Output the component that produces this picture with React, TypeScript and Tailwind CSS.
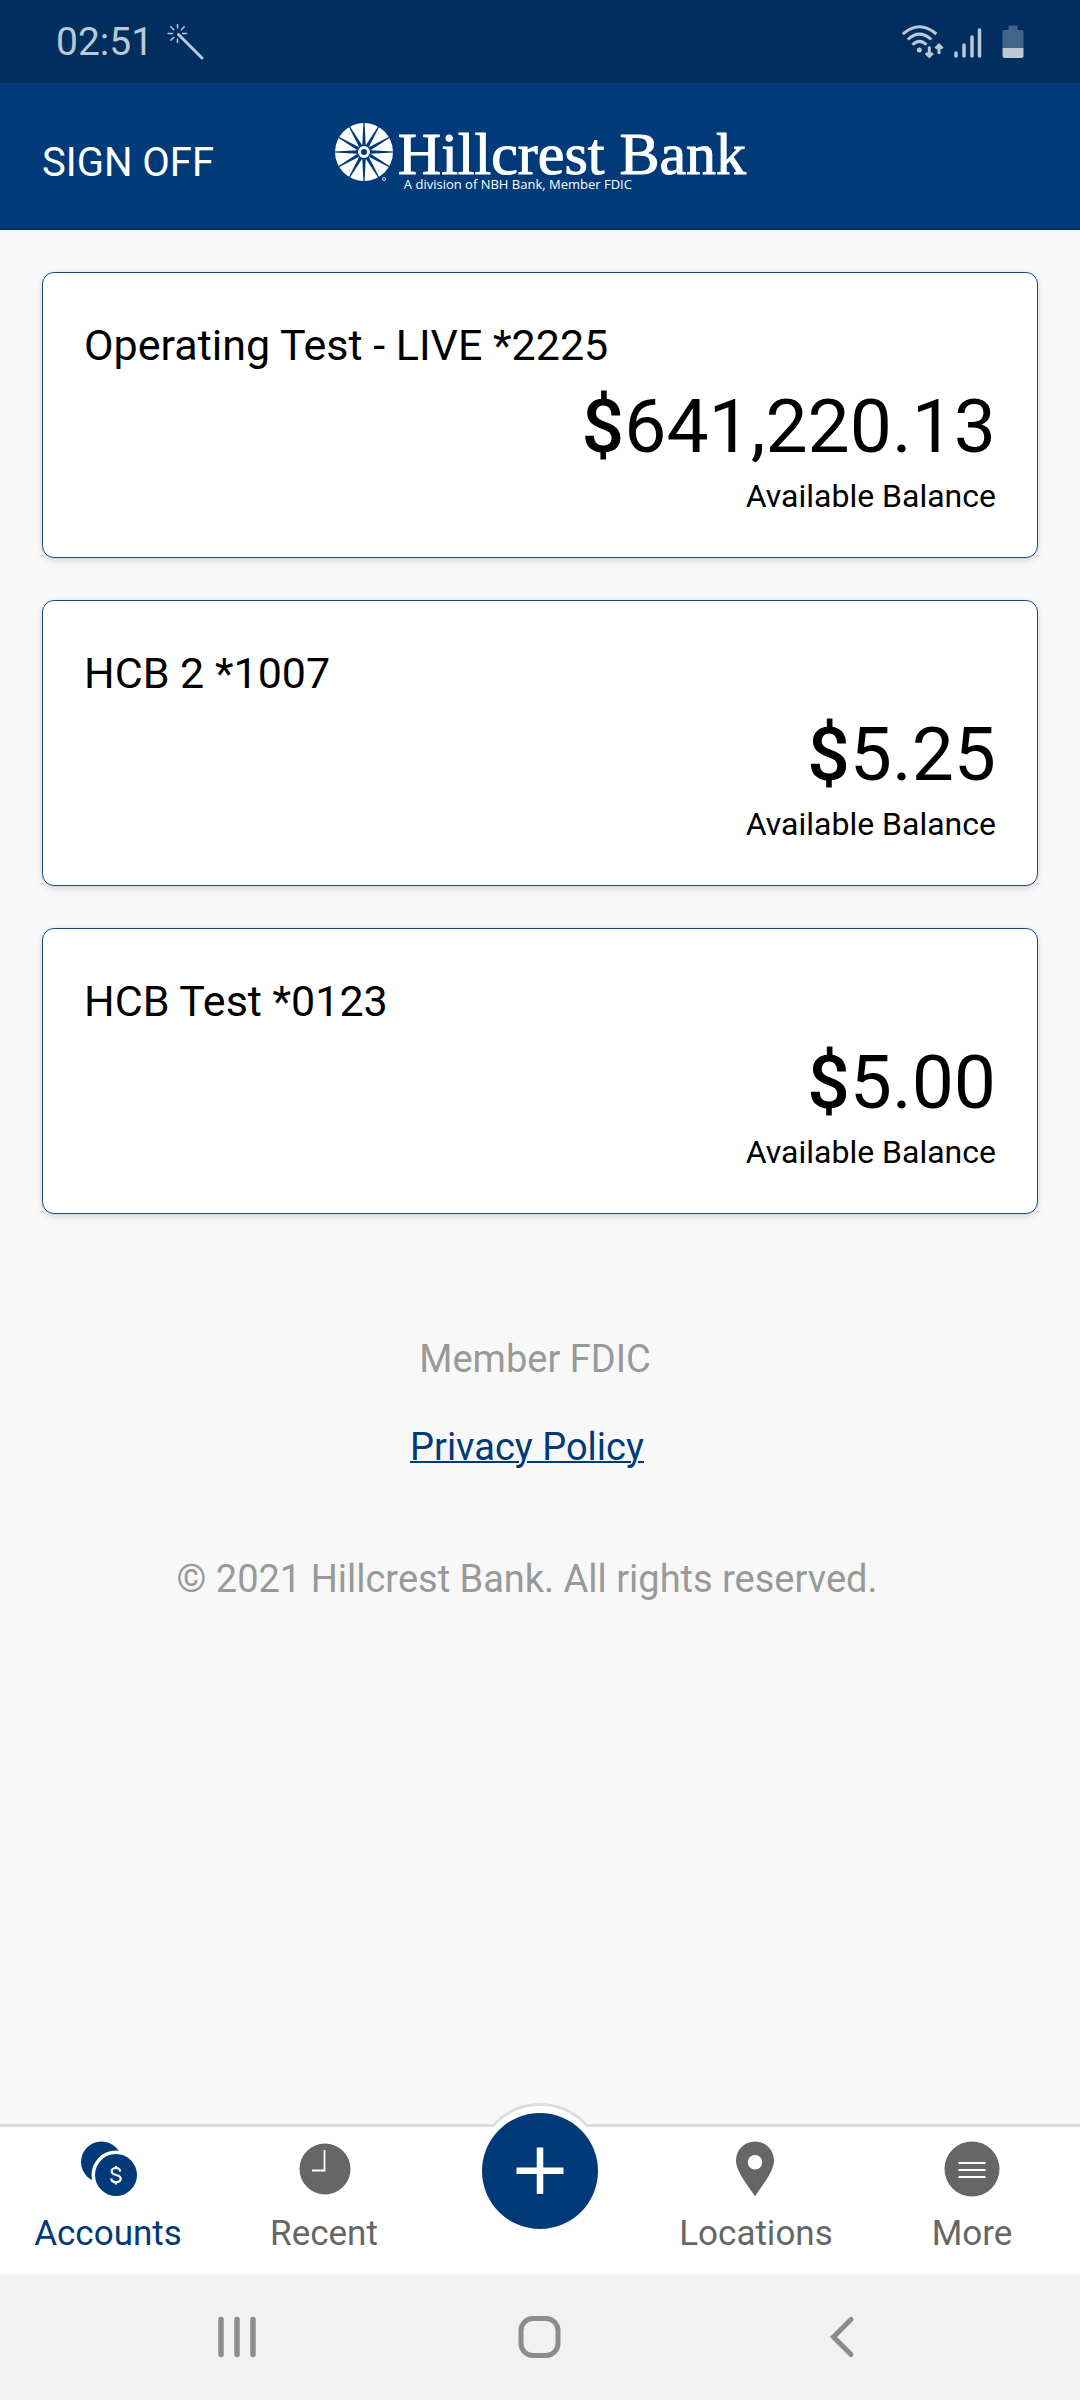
import React from 'react';

interface Account {
  name: string;
  balance: string;
}

const accounts: Account[] = [
  { name: 'Operating Test - LIVE *2225', balance: '641,220.13' },
  { name: 'HCB 2 *1007', balance: '5.25' },
  { name: 'HCB Test *0123', balance: '5.00' },
];

const spokes = [0, 30, 60, 90, 120, 150, 180, 210, 240, 270, 300, 330];

const WandIcon = () => (
  <svg width="38" height="38" viewBox="0 0 38 38" fill="none" stroke="currentColor" strokeLinecap="round">
    <path d="M11.5 11.5 35 35" strokeWidth="3" />
    <path d="M10.5 1.500v3.500M10.500 16v3.500M1 10.500h4.500M15.500 10.500h4M3.800 3.800l3 3M17.300 3.800l-3 3M3.800 17.200l3-3" strokeWidth="1.500" />
  </svg>
);

const WifiIcon = () => (
  <svg width="42" height="34" viewBox="0 0 42 34" fill="none" stroke="currentColor" strokeWidth="3">
    <path d="M.8 9Q17.500-5.500 34.300 9M5.800 14.500Q17.500 3.800 29.300 14.500M10.500 19.800Q17.500 12.800 24.500 19.800" />
    <circle cx="17.300" cy="25" r="2.500" fill="currentColor" stroke="none" />
    <path d="M27.300 21.500v9M23.800 28l3.500 3.500 3.500-3.500M37 29v-8M33.500 23.500 37 20l3.500 3.500" />
  </svg>
);

const SignalIcon = () => (
  <svg width="28" height="34" viewBox="0 0 28 34" stroke="currentColor" strokeWidth="3.500" strokeLinecap="round">
    <path d="M2 28v3M10 20v11M18 12v19M25.500 5v26" />
  </svg>
);

const BatteryIcon = () => (
  <svg width="22" height="34" viewBox="0 0 22 34" fill="currentColor">
    <path d="M6.500 1.500a1 1 0 0 1 1-1h7a1 1 0 0 1 1 1V5H20a1.500 1.500 0 0 1 1.500 1.500V23H.5V6.500A1.500 1.500 0 0 1 2 5h4.500z" opacity="0.350" />
    <path d="M.5 23h21v8a2 2 0 0 1-2 2h-17a2 2 0 0 1-2-2z" />
  </svg>
);

const WheelLogo = () => (
  <svg width="60" height="60" viewBox="-30 -30 60 60">
    <circle r="29" fill="white" />
    {spokes.map((angle) => (
      <path key={angle} d="M-1.700-7 1.700-7 .6-29.500-.6-29.500z" fill="#003a78" transform={`rotate(${angle})`} />
    ))}
    <circle r="7.500" fill="#003a78" />
    <circle r="4.500" fill="none" stroke="white" strokeWidth="3" />
    <circle cx="20" cy="27" r="1.500" fill="none" stroke="white" strokeWidth="0.800" />
  </svg>
);

const CoinsIcon = () => (
  <svg width="58" height="56" viewBox="0 0 58 56">
    <circle cx="22.500" cy="21" r="20.500" fill="#003a78" />
    <circle cx="37" cy="34" r="24.500" fill="white" />
    <circle cx="37" cy="34" r="21" fill="#003a78" />
    <path d="M41.300 30.500c-.4-2.300-2-3.500-4.300-3.500-2.500 0-4.300 1.200-4.300 3.400 0 4.900 9 2.200 9 7.200 0 2.300-2 3.600-4.700 3.600s-4.500-1.200-4.800-3.700M37 25v3M37 40.500v3" fill="none" stroke="white" strokeWidth="2.200" />
  </svg>
);

const ClockIcon = () => (
  <svg width="56" height="56" viewBox="0 0 56 56">
    <circle cx="29" cy="28" r="25.500" fill="#666" />
    <path d="M28.500 9v20.500H16" fill="none" stroke="white" strokeWidth="1.800" />
  </svg>
);

const PinIcon = () => (
  <svg width="56" height="56" viewBox="0 0 56 56">
    <path fillRule="evenodd" fill="#666" d="M27 .5C16.500.5 8 9 8 19.500 8 31 21 45.500 27 55.500 33 45.500 46 31 46 19.500 46 9 37.500.5 27 .5zM27 14a7 7 0 1 1 0 14.500A7 7 0 0 1 27 14z" />
  </svg>
);

const MoreIcon = () => (
  <svg width="56" height="56" viewBox="0 0 56 56">
    <circle cx="28" cy="28" r="27.500" fill="#666" />
    <path d="M14.500 22h27M14.500 29h27M14.500 36h27" stroke="white" strokeWidth="1.800" />
  </svg>
);

const AccountCard: React.FC<{ account: Account }> = ({ account }) => (
  <section className="rounded-xl border border-[#1a4b7c] bg-white px-[41px] pt-12 pb-[39px] text-black shadow-[0_2px_6px_rgba(0,0,0,0.16)]">
    <h2 className="text-[43px] leading-[48px]">{account.name}</h2>
    <p className="mt-[9px] text-right text-[75px] leading-[96px]">
      <span className="font-medium">$</span>{account.balance}
    </p>
    <p className="text-right text-[32px] leading-[44px]">Available Balance</p>
  </section>
);

const NavItem: React.FC<{ label: string; icon: React.ReactNode; active?: boolean }> = ({ label, icon, active }) => (
  <button type="button" className={`flex flex-col items-center gap-[17px] pt-3.5 pb-5 ${active ? 'text-[#003a78]' : 'text-[#666]'}`}>
    {icon}
    <span className="text-[35px] leading-10">{label}</span>
  </button>
);

const App = () => {
  return (
    <div className="flex min-h-screen flex-col bg-[#f8f8f8] font-['Roboto',sans-serif]">
      {/* Device status bar */}
      <div className="flex h-[83px] items-center justify-between bg-[#002e5e] px-14 text-[#bbc8d7]">
        <div className="flex items-center gap-3.5">
          <span className="text-[39px] leading-[44px]">02:51</span>
          <WandIcon />
        </div>
        <div className="flex items-center">
          <WifiIcon />
          <span className="ml-2.5"><SignalIcon /></span>
          <span className="ml-5"><BatteryIcon /></span>
        </div>
      </div>

      <header className="grid h-[147px] grid-cols-[1fr_auto_1fr] items-center border-b border-[#00336a] bg-[#003a78] px-[42px] text-white">
        <button type="button" className="justify-self-start pt-3.5 text-[40px] leading-[48px]">SIGN OFF</button>
        <div className="flex items-start gap-1">
          <WheelLogo />
          <div className="pt-2">
            <div className="font-['Liberation_Serif',serif] text-[60px] leading-[48px] whitespace-nowrap [-webkit-text-stroke:1px_white]">Hillcrest Bank</div>
            <div className="pl-1.5 font-['Open_Sans',sans-serif] text-[13px] leading-3 font-medium">A division of NBH Bank, Member FDIC</div>
          </div>
        </div>
      </header>

      <main className="flex flex-1 flex-col gap-[42px] px-[42px] pt-[42px]">
        {accounts.map((account) => (
          <AccountCard key={account.name} account={account} />
        ))}

        <footer className="mt-[81px] pr-[26px] text-center text-[38px] leading-[44px] text-[#999]">
          <p className="pl-4">Member FDIC</p>
          <p className="mt-11">
            <a href="#privacy" className="text-[#003a78] underline decoration-2">Privacy Policy</a>
          </p>
          <p className="mt-[88px]">© 2021 Hillcrest Bank. All rights reserved.</p>
        </footer>
      </main>

      <nav className="grid grid-cols-5 border-t-3 border-[#ddd] bg-white">
        <NavItem label="Accounts" icon={<CoinsIcon />} active />
        <NavItem label="Recent" icon={<ClockIcon />} />
        <div className="relative flex justify-center">
          <button type="button" aria-label="Add" className="absolute -top-6">
            <svg width="136" height="128" viewBox="0 0 136 128">
              <circle cx="68" cy="64" r="62.500" fill="white" stroke="#ddd" strokeWidth="3" />
              <path d="M0 24h136v104H0z" fill="white" />
              <circle cx="68" cy="68" r="58" fill="#003a78" />
              <path d="M68 44.500v46.500M44.500 67.800h47" stroke="white" strokeWidth="6.500" />
            </svg>
          </button>
        </div>
        <NavItem label="Locations" icon={<PinIcon />} />
        <NavItem label="More" icon={<MoreIcon />} />
      </nav>

      {/* Device navigation buttons */}
      <div className="grid h-[126px] grid-cols-3 items-center bg-[#f1f1f1] px-[86px] text-[#8c8c8c]">
        <button type="button" aria-label="Recent apps" className="justify-self-center">
          <svg width="44" height="44" viewBox="0 0 44 44" stroke="currentColor" strokeWidth="5.500" strokeLinecap="round">
            <path d="M6 4.500v35M22 4.500v35M38 4.500v35" />
          </svg>
        </button>
        <button type="button" aria-label="Home" className="justify-self-center">
          <svg width="44" height="44" viewBox="0 0 44 44" fill="none" stroke="currentColor" strokeWidth="5">
            <rect x="3" y="3.500" width="37" height="37" rx="12" />
          </svg>
        </button>
        <button type="button" aria-label="Back" className="justify-self-center">
          <svg width="44" height="44" viewBox="0 0 44 44" fill="none" stroke="currentColor" strokeWidth="5" strokeLinecap="round">
            <path d="M30 4.500 12.500 22 30 39.500" />
          </svg>
        </button>
      </div>
    </div>
  );
};

export default App;
